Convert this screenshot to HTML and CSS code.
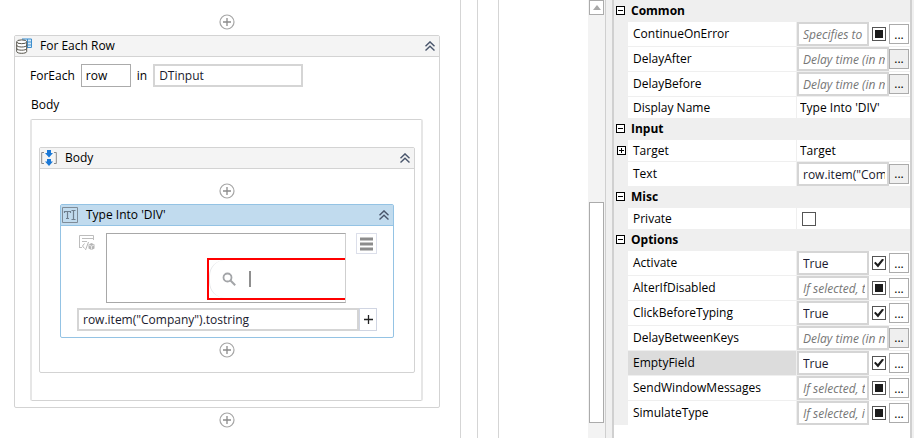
FILE: index.html
```html
<!DOCTYPE html>
<html lang="en">
<head>
    <meta charset="UTF-8">
    <meta name="viewport" content="width=device-width, initial-scale=1.0">
    <title>Workflow Designer</title>
    <link rel="stylesheet" href="styles.css">
</head>
<body>

    <!-- shared icons -->
    <svg class="sprite" aria-hidden="true">
        <symbol id="add" viewBox="0 0 16 16">
            <circle cx="8" cy="8" r="7" fill="none" stroke="#a6a6a6" stroke-width="1.2"/>
            <path d="M8 4v8M4 8h8" stroke="#8c8c8c" stroke-width="1.3"/>
        </symbol>
        <symbol id="collapse" viewBox="0 0 10 10">
            <path d="M.5 5.2L5 .9l4.500 4.300M.5 9.500L5 5.200l4.500 4.300" fill="none" stroke="#4a566c" stroke-width="1.4"/>
        </symbol>
    </svg>

    <main class="designer">
        <div class="canvas">
            <div class="frame frame-outer">
                <div class="frame frame-middle">
                    <div class="frame frame-inner">
                        <button class="add" aria-label="Add activity"><svg><use href="#add"/></svg></button>

                        <section class="activity">
                            <header class="activity-header">
                                <svg class="icon" viewBox="0 0 16 16">
                                    <path d="M6 .5h9.500v9H11z" fill="#d9ebf8"/>
                                    <path d="M6 1h9.500M9 4h6.500M10 7h5.500M11 9.500h4.500M11.500 1v8.500M15.500 1v8.500" stroke="#3f8fce" fill="none"/>
                                    <path d="M.7 4v9.500c0 2.400 10 2.400 10 0V4" fill="#fff" stroke="#55534a" stroke-width="1"/>
                                    <ellipse cx="5.700" cy="3.800" rx="5" ry="1.900" fill="#fff" stroke="#55534a" stroke-width="1"/>
                                    <path d="M.7 7.200c0 2.400 10 2.400 10 0M.7 10.400c0 2.400 10 2.400 10 0" fill="none" stroke="#55534a" stroke-width="1"/>
                                </svg>
                                <span>For Each Row</span>
                                <button class="collapse" aria-label="Collapse For Each Row"><svg><use href="#collapse"/></svg></button>
                            </header>
                            <div class="foreach-body">
                                <div class="foreach-line">
                                    <label for="item">ForEach</label>
                                    <input class="item" type="text" id="item" value="row">
                                    <label for="collection">in</label>
                                    <input class="expression collection" type="text" id="collection" value="DTinput">
                                </div>
                                <p class="body-label">Body</p>

                                <div class="dropzone">
                                    <section class="activity">
                                        <header class="activity-header">
                                            <svg class="icon" viewBox="0 0 16 16">
                                                <path d="M3 2.500H.7v11H3M13 2.500h2.300v11H13" fill="none" stroke="#8a8a8a"/>
                                                <path d="M6 0h4v3h2L8 7.500 4 3h2zM6 9h4v2.500h2L8 16l-4-4.500h2z" fill="#1a78d6"/>
                                            </svg>
                                            <span>Body</span>
                                            <button class="collapse" aria-label="Collapse Body"><svg><use href="#collapse"/></svg></button>
                                        </header>
                                        <div class="sequence">
                                            <button class="add" aria-label="Add activity"><svg><use href="#add"/></svg></button>

                                            <section class="activity selected">
                                                <header class="activity-header">
                                                    <svg class="icon" viewBox="0 0 16 16">
                                                        <path d="M.5.5h15v15H.5z" fill="none" stroke="#7f8c98"/>
                                                        <path d="M2.500 6V4.500h6V6M5.500 4.500v7M4 11.500h3M9.500 3.500h4M9.500 12.500h4M11.500 3.500v9" fill="none" stroke="#6f7f8e" stroke-width="1.200"/>
                                                    </svg>
                                                    <span>Type Into 'DIV'</span>
                                                    <button class="collapse" aria-label="Collapse Type Into"><svg><use href="#collapse"/></svg></button>
                                                </header>
                                                <div class="type-into">
                                                    <div class="target-line">
                                                        <svg class="icon selector" viewBox="0 0 16 16">
                                                            <path d="M.5 13V.5h14V5M3 3.500h11.500M3 6.500h5M.5 12.500H3" fill="none" stroke="#bdbdbd"/>
                                                            <path d="M5.500 8.500L3.500 11l2 2.500M9.500 7l-3 8" fill="none" stroke="#b5b5b5"/>
                                                            <path d="M12.500 8l3 1.500v4l-3 1.500-3-1.500v-4z" fill="#b5b5b5"/>
                                                            <path d="M10 10l2.500 1.200L15 10M12.500 11.200V14.500" fill="none" stroke="#fff" stroke-width=".7"/>
                                                        </svg>
                                                        <div class="preview">
                                                            <div class="highlight">
                                                                <div class="search-box">
                                                                    <svg viewBox="0 0 14 14">
                                                                        <circle cx="5.500" cy="5.500" r="4" fill="none" stroke="#a3a5a8" stroke-width="1.800"/>
                                                                        <path d="M8.500 8.500l4.700 4.700" stroke="#a3a5a8" stroke-width="2"/>
                                                                    </svg>
                                                                    <span class="caret"></span>
                                                                </div>
                                                            </div>
                                                        </div>
                                                        <button class="menu" aria-label="Options menu">
                                                            <svg viewBox="0 0 13 14"><path d="M0 2h13M0 7h13M0 12h13" stroke="#8c8c8c" stroke-width="3"/></svg>
                                                        </button>
                                                    </div>
                                                    <div class="text-line">
                                                        <input class="expression" type="text" aria-label="Text to type" value='row.item("Company").tostring'>
                                                        <button class="insert" aria-label="Insert key">
                                                            <svg viewBox="0 0 9 9"><path d="M4.500 0v9M0 4.500h9" stroke="#222" stroke-width="1.300"/></svg>
                                                        </button>
                                                    </div>
                                                </div>
                                            </section>

                                            <button class="add" aria-label="Add activity"><svg><use href="#add"/></svg></button>
                                        </div>
                                    </section>
                                </div>
                            </div>
                        </section>

                        <button class="add" aria-label="Add activity"><svg><use href="#add"/></svg></button>
                    </div>
                </div>
            </div>
        </div>
        <div class="scrollbar">
            <button class="scroll-up" aria-label="Scroll up">
                <svg viewBox="0 0 8 5"><path d="M4 0l4 5H0z" fill="#a9a9a9"/></svg>
            </button>
            <div class="track"><div class="thumb"></div></div>
        </div>
    </main>

    <aside class="properties">
        <table>
            <colgroup>
                <col class="col-gutter">
                <col class="col-name">
                <col>
            </colgroup>
            <tbody>
                <tr class="category">
                    <td class="gutter"><button class="toggle" aria-label="Collapse Common"></button></td>
                    <th colspan="2">Common</th>
                </tr>
                <tr>
                    <td class="gutter"></td>
                    <td class="name"><label for="continue">ContinueOnError</label></td>
                    <td><div class="value"><input class="expression" type="text" id="continue" placeholder="Specifies to continue"><input class="check mixed" type="checkbox" aria-label="ContinueOnError" aria-checked="mixed"><button class="more flat">...</button></div></td>
                </tr>
                <tr>
                    <td class="gutter"></td>
                    <td class="name"><label for="after">DelayAfter</label></td>
                    <td><div class="value"><input class="expression" type="text" id="after" placeholder="Delay time (in milliseconds)"><button class="more">...</button></div></td>
                </tr>
                <tr>
                    <td class="gutter"></td>
                    <td class="name"><label for="before">DelayBefore</label></td>
                    <td><div class="value"><input class="expression" type="text" id="before" placeholder="Delay time (in milliseconds)"><button class="more">...</button></div></td>
                </tr>
                <tr class="short">
                    <td class="gutter"></td>
                    <td class="name"><label for="display">Display Name</label></td>
                    <td><div class="value"><input class="plain" type="text" id="display" value="Type Into 'DIV'"></div></td>
                </tr>
            </tbody>
            <tbody>
                <tr class="category">
                    <td class="gutter"><button class="toggle" aria-label="Collapse Input"></button></td>
                    <th colspan="2">Input</th>
                </tr>
                <tr class="short">
                    <td class="gutter"><button class="toggle closed" aria-label="Expand Target"></button></td>
                    <td class="name"><label for="target">Target</label></td>
                    <td><div class="value"><input class="plain" type="text" id="target" value="Target"></div></td>
                </tr>
                <tr>
                    <td class="gutter"></td>
                    <td class="name"><label for="text">Text</label></td>
                    <td><div class="value"><input class="expression" type="text" id="text" value='row.item("Company").tostring'><button class="more">...</button></div></td>
                </tr>
            </tbody>
            <tbody>
                <tr class="category">
                    <td class="gutter"><button class="toggle" aria-label="Collapse Misc"></button></td>
                    <th colspan="2">Misc</th>
                </tr>
                <tr class="short">
                    <td class="gutter"></td>
                    <td class="name"><label for="private">Private</label></td>
                    <td><div class="value"><input class="check" type="checkbox" id="private"></div></td>
                </tr>
            </tbody>
            <tbody>
                <tr class="category">
                    <td class="gutter"><button class="toggle" aria-label="Collapse Options"></button></td>
                    <th colspan="2">Options</th>
                </tr>
                <tr>
                    <td class="gutter"></td>
                    <td class="name"><label for="activate">Activate</label></td>
                    <td><div class="value"><input class="expression" type="text" id="activate" value="True"><input class="check" type="checkbox" aria-label="Activate" checked><button class="more flat">...</button></div></td>
                </tr>
                <tr>
                    <td class="gutter"></td>
                    <td class="name"><label for="alter">AlterIfDisabled</label></td>
                    <td><div class="value"><input class="expression" type="text" id="alter" placeholder="If selected, the"><input class="check mixed" type="checkbox" aria-label="AlterIfDisabled" aria-checked="mixed"><button class="more flat">...</button></div></td>
                </tr>
                <tr>
                    <td class="gutter"></td>
                    <td class="name"><label for="click">ClickBeforeTyping</label></td>
                    <td><div class="value"><input class="expression" type="text" id="click" value="True"><input class="check" type="checkbox" aria-label="ClickBeforeTyping" checked><button class="more flat">...</button></div></td>
                </tr>
                <tr>
                    <td class="gutter"></td>
                    <td class="name"><label for="between">DelayBetweenKeys</label></td>
                    <td><div class="value"><input class="expression" type="text" id="between" placeholder="Delay time (in milliseconds)"><button class="more">...</button></div></td>
                </tr>
                <tr class="current">
                    <td class="gutter"></td>
                    <td class="name"><label for="empty">EmptyField</label></td>
                    <td><div class="value"><input class="expression" type="text" id="empty" value="True"><input class="check" type="checkbox" aria-label="EmptyField" checked><button class="more flat">...</button></div></td>
                </tr>
                <tr>
                    <td class="gutter"></td>
                    <td class="name"><label for="messages">SendWindowMessages</label></td>
                    <td><div class="value"><input class="expression" type="text" id="messages" placeholder="If selected, the"><input class="check mixed" type="checkbox" aria-label="SendWindowMessages" aria-checked="mixed"><button class="more flat">...</button></div></td>
                </tr>
                <tr>
                    <td class="gutter"></td>
                    <td class="name"><label for="simulate">SimulateType</label></td>
                    <td><div class="value"><input class="expression" type="text" id="simulate" placeholder="If selected, it"><input class="check mixed" type="checkbox" aria-label="SimulateType" aria-checked="mixed"><button class="more flat">...</button></div></td>
                </tr>
            </tbody>
        </table>
    </aside>

</body>
</html>
```
FILE: styles.css
```css
* {
    box-sizing: border-box;
}

body {
    margin: 0;
    height: 100vh;
    display: flex;
    gap: 6px;
    overflow: hidden;
    padding-right: 2px;
    background-color: #f0f0f0;
    font-family: "Segoe UI", "Open Sans", sans-serif;
    font-size: 12px;
    line-height: 16px;
    color: #000;
}

button,
input {
    font: inherit;
    margin: 0;
    padding: 0;
    border-radius: 0;
}

button {
    display: flex;
    align-items: center;
    justify-content: center;
    border: none;
    background: none;
}

.sprite {
    display: none;
}

/* designer */
.designer {
    flex: 1;
    display: flex;
    background-color: #fff;
    border-right: 1px solid #cfcfcf;
}

.canvas {
    flex: 1;
    overflow: hidden;
}

.frame {
    height: 100%;
    border-right: 1px solid #d5d5d5;
}

.frame-outer {
    width: 499px;
    padding-right: 20px;
}

.frame-middle {
    padding-right: 16px;
}

.frame-inner {
    padding: 14px 20px 0 14px;
}

.add {
    width: 16px;
    height: 16px;
    margin: 0 auto;
}

.add svg {
    width: 16px;
    height: 16px;
}

.activity {
    margin: 5px 0 4px;
    border: 1px solid #d3d3d3;
    border-radius: 2px;
    background-color: #fff;
}

.activity-header {
    display: flex;
    align-items: center;
    height: 21px;
    padding: 0 4px 0 1px;
    border-bottom: 1px solid #d3d3d3;
    background-color: #f4f4f4;
}

.activity-header span {
    flex: 1;
    padding-left: 8px;
}

.icon {
    width: 16px;
    height: 16px;
}

.collapse svg {
    width: 10px;
    height: 10px;
}

.expression {
    border: 2px solid #d5d5d5;
    background-color: #fff;
    color: #1a1a2e;
}

.foreach-body {
    padding: 7px 16px 6px 15px;
}

.foreach-line {
    display: flex;
    align-items: center;
    gap: 6px;
}

.foreach-line input {
    height: 23px;
    padding: 0 4px;
}

.foreach-line .item {
    width: 50px;
    border: 1px solid #ababab;
}

.foreach-line .collection {
    width: 150px;
}

.body-label {
    margin: 10px 0 6px 1px;
}

.dropzone {
    padding: 22px 6px 23px 7px;
    border: 1px solid #d3d3d3;
    border-right: 2px solid #e6e6e6;
    border-left: 2px solid #e6e6e6;
    border-radius: 2px;
}

.sequence {
    padding: 14px 20px 10px;
}

.sequence .add:last-child {
    margin-bottom: 4px;
}

.selected {
    border-color: #94c3e4;
}

.selected .activity-header {
    border-color: #94c3e4;
    background-color: #c1dbee;
}

.type-into {
    padding: 7px 16px 6px;
}

.target-line {
    display: flex;
    align-items: flex-start;
}

.selector {
    margin: 2px 11px 0 2px;
}

.preview {
    flex: 1;
    height: 70px;
    padding: 24px 0 2px 100px;
    border: 1px solid #a8a8a8;
    border-right: 1px solid #cfcfcf;
}

.highlight {
    height: 42px;
    border: 2px solid #f00;
    border-right: none;
}

.search-box {
    height: 100%;
    display: flex;
    align-items: center;
    gap: 13px;
    padding-left: 12px;
    border-left: 1px solid #e4e6e8;
    border-radius: 16px 0 0 16px;
}

.search-box svg {
    width: 14px;
    height: 14px;
}

.caret {
    width: 2px;
    height: 16px;
    background-color: #8f8f8f;
}

.menu {
    width: 21px;
    height: 21px;
    margin-left: 10px;
    border: 1px solid #dcdfea;
}

.menu svg {
    width: 13px;
    height: 14px;
}

.text-line {
    display: flex;
    margin-top: 5px;
}

.text-line .expression {
    flex: 1;
    min-width: 0;
    height: 23px;
    padding: 0 4px;
}

.insert {
    width: 18px;
    height: 23px;
    border: 1px solid #d0d5e2;
}

.insert svg {
    width: 9px;
    height: 9px;
}

.scrollbar {
    width: 17px;
    display: flex;
    flex-direction: column;
    padding: 0 1px;
    background-color: #f3f3f3;
}

.scroll-up {
    height: 15px;
    border: 1px solid #ababab;
    background-color: #fff;
}

.scroll-up svg {
    width: 8px;
    height: 5px;
}

.track {
    flex: 1;
    display: flex;
    flex-direction: column;
    padding: 187px 0 15px;
}

.thumb {
    flex: 1;
    border: 1px solid #ababab;
    background-color: #fff;
}

/* properties */
.properties {
    width: 300px;
    overflow: hidden;
    border: solid #d0d0d0;
    border-width: 0 2px;
    background-color: #fff;
}

.properties table {
    width: 100%;
    border-spacing: 0;
    table-layout: fixed;
    background-color: #efefef;
}

.col-gutter {
    width: 14px;
}

.col-name {
    width: 169px;
}

.properties td,
.properties th {
    height: 25px;
    padding: 0;
    border-bottom: 1px solid #efefef;
    background-color: #fff;
    text-align: left;
}

.properties .category td,
.properties .category th {
    height: 22px;
    background-color: #efefef;
}

.properties .short td {
    height: 22px;
}

.properties tr:last-child td {
    height: 24px;
    border-bottom: none;
}

.properties .short:last-child td {
    height: 21px;
}

.properties .category th {
    padding-left: 3px;
}

.properties .gutter {
    padding-left: 2px;
    background-color: #efefef;
}

.properties .name {
    padding-left: 5px;
    border-right: 1px solid #efefef;
}

.properties .current .name {
    background-color: #dcdcdc;
}

.toggle {
    width: 9px;
    height: 9px;
    border: 1px solid #000;
    background: linear-gradient(#000, #000) center / 5px 1px no-repeat #fff;
}

.closed {
    margin-left: 1px;
    background: linear-gradient(#000, #000) center / 5px 1px no-repeat, linear-gradient(#000, #000) center / 1px 5px no-repeat #fff;
}

.value {
    display: flex;
    align-items: center;
    padding-right: 1px;
}

.value .expression {
    flex: 1;
    min-width: 0;
    height: 24px;
    padding: 0 2px 0 4px;
}

.value .expression::placeholder {
    color: #767676;
    font-style: italic;
}

.plain {
    width: 100%;
    padding-left: 3px;
    border: none;
    background: none;
}

.check {
    appearance: none;
    display: flex;
    align-items: center;
    justify-content: center;
    width: 14px;
    height: 14px;
    margin: 0 3px;
    border: 1px solid #555;
    background-color: #fff;
}

.check:only-child {
    margin-left: 5px;
}

.check:checked::before {
    content: "";
    width: 10px;
    height: 9px;
    background-color: #1c1c1c;
    clip-path: polygon(0 50%, 15% 36%, 38% 62%, 84% 0, 100% 14%, 40% 100%);
}

.mixed::before {
    content: "";
    width: 8px;
    height: 8px;
    background-color: #1c1c1c;
}

.more {
    width: 20px;
    height: 20px;
    border: 1px solid #ababab;
    background-color: #efefef;
}

.flat {
    align-items: flex-end;
    background-color: #fff;
}
```
